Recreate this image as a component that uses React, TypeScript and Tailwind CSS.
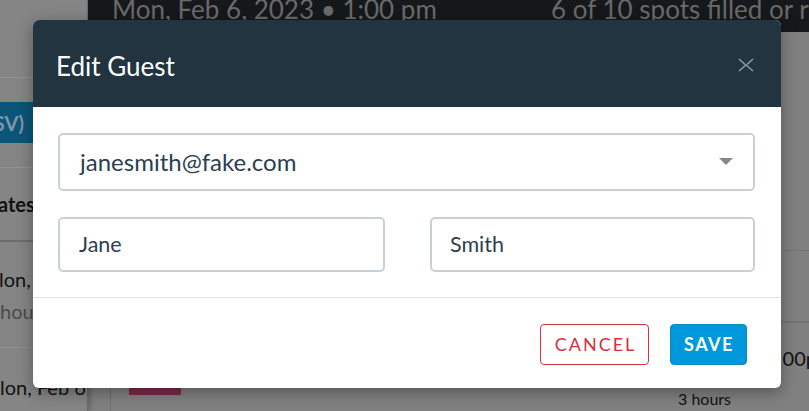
import React from "react";

export default function App() {
  return (
    <div
      className="relative w-[809px] h-[411px] overflow-hidden bg-[#808080]"
      style={{ fontFamily: "Lato, 'Open Sans', sans-serif" }}
    >
      {/* Dimmed background page */}
      <div className="flex h-full w-full">
        <div className="w-[88px] h-full flex flex-col bg-[#858585] border-r border-[#6a6a6a] shadow-[2px_0_6px_rgba(0,0,0,0.25)] overflow-hidden">
          <div className="h-[78px] border-b border-[#909090]" />
          <div className="h-[24px]" />
          <div className="h-[41px] bg-[#0b5578] flex items-center justify-end pr-[63px] text-[20px] font-bold text-[#7b97a8] whitespace-nowrap">
            (CSV)
          </div>
          <div className="h-[25px] border-b border-[#909090]" />
          <div className="h-[74px] flex items-center text-[20px] font-bold text-[#111] border-b-2 border-[#6e6e6e]">
            <span className="-ml-[2px]">ates</span>
          </div>
          <div className="h-[106px] flex flex-col justify-center text-[20px] leading-[32px] border-b border-[#909090]">
            <span className="text-[#111] -ml-[1px]">lon,</span>
            <span className="text-[#4a4a4a]">hou</span>
          </div>
          <div className="pt-[24px] text-[20px] text-[#111] whitespace-nowrap">lon, Feb 6</div>
        </div>
        <div className="flex-1 flex flex-col">
          <div className="h-[39px] bg-[#16191c] flex items-start overflow-hidden">
            <div className="flex w-full -mt-[10px] text-[26px] text-[#6a6a6a] whitespace-nowrap">
              <span className="ml-[24px] w-[439px]">Mon, Feb 6, 2023 • 1:00 pm</span>
              <span>6 of 10 spots filled or r</span>
            </div>
          </div>
          <div className="h-[219px] shrink-0 border-b border-[#747474]" />
          <div className="h-[72px] shrink-0 border-b-2 border-[#747474]" />
          <div className="h-[58px] shrink-0 flex items-end justify-end pb-[8px] text-[20px] text-[#111]">
            <span className="-mr-[8px]">00p</span>
          </div>
          <div className="flex-1 flex">
            <div className="w-[23px] border-r border-[#6e6e6e]" />
            <div className="ml-[18px] w-[52px] h-[14px] bg-[#7a2a48]" />
            <div className="flex-1 flex justify-end pr-[78px] pt-[6px] text-[16px] text-[#111] whitespace-nowrap">3 hours</div>
          </div>
        </div>
      </div>

      {/* Modal */}
      <div className="absolute left-[33px] top-[20px] w-[748px] h-[368px] rounded-[6px] bg-white overflow-hidden shadow-[0_4px_16px_rgba(0,0,0,0.35)] flex flex-col">
        <div className="h-[87px] shrink-0 bg-[#21343f] flex items-center justify-between pl-[23px] pr-[26px]">
          <span className="text-[26px] text-white leading-none pt-[4px]">Edit Guest</span>
          <svg width="18" height="16" viewBox="0 0 18 16" className="mt-[3px]">
            <path d="M2 2 L8 7.5 M16 2 L10 7.5 M2 14 L9 8 L16 14" stroke="#8d9ba5" strokeWidth="1.6" fill="none" />
          </svg>
        </div>
        <div className="flex flex-col gap-[26px] pt-[26px] pb-[25px] pl-[25px] pr-[26px] border-b border-[#e2e2e2]">
          <div className="h-[58px] border-2 border-[#c9d0d8] rounded-[5px] flex items-center justify-between pl-[20px] pr-[20px]">
            <span className="text-[24px] text-[#2c3e50]">janesmith@fake.com</span>
            <svg width="14" height="8" viewBox="0 0 14 8">
              <path d="M0 0 L14 0 L7 7 Z" fill="#888" />
            </svg>
          </div>
          <div className="flex justify-between">
            <div className="w-[327px] h-[55px] border-2 border-[#c9d0d8] rounded-[5px] flex items-center pl-[19px]">
              <span className="text-[21.5px] text-[#2c3e50]">Jane</span>
            </div>
            <div className="w-[325px] h-[55px] border-2 border-[#c9d0d8] rounded-[5px] flex items-center pl-[18px]">
              <span className="text-[21.5px] text-[#2c3e50]">Smith</span>
            </div>
          </div>
        </div>
        <div className="flex-1 flex items-center justify-end gap-[21px] pr-[34px] pt-[2px]">
          <button className="w-[109px] h-[41px] border border-[#d9303e] rounded-[4px] text-[#d63140] text-[18px] tracking-[2px] pl-[2px]">
            CANCEL
          </button>
          <button className="w-[77px] h-[41px] bg-[#0098dc] border border-[#0a89c4] rounded-[4px] text-white text-[18px] font-bold tracking-[1.5px] pl-[1px]">
            SAVE
          </button>
        </div>
      </div>
    </div>
  );
}
